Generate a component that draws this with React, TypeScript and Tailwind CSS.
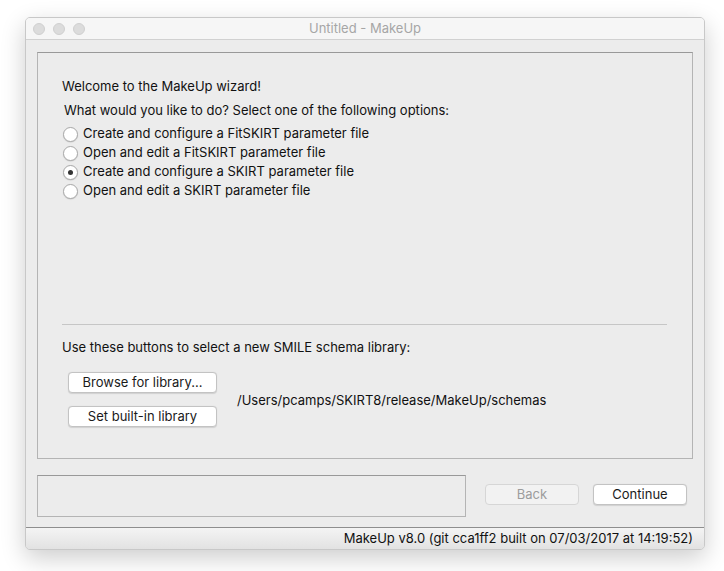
import React, { useState } from 'react';

const options = [
  'Create and configure a FitSKIRT parameter file',
  'Open and edit a FitSKIRT parameter file',
  'Create and configure a SKIRT parameter file',
  'Open and edit a SKIRT parameter file',
];

const Radio: React.FC<{ checked: boolean }> = ({ checked }) => (
  <span className="flex h-[15px] w-[15px] items-center justify-center rounded-full border border-[#a9a9a9] bg-white shadow-[0_0.5px_1px_rgba(0,0,0,0.15)]">
    {checked && <span className="h-[5px] w-[5px] rounded-full bg-[#333]" />}
  </span>
);

const MacButton: React.FC<{ label: string; disabled?: boolean; className?: string }> = ({
  label,
  disabled,
  className = '',
}) => (
  <button
    className={`flex h-[21px] items-center justify-center rounded-[4px] border text-[13px] ${
      disabled
        ? 'border-[#d6d6d6] bg-[#f2f2f2] text-[#9c9c9c]'
        : 'border-[#c3c3c3] bg-white text-[#1a1a1a] shadow-[0_0.5px_1px_rgba(0,0,0,0.12)]'
    } ${className}`}
  >
    {label}
  </button>
);

export default function App() {
  const [selected, setSelected] = useState(2);

  return (
    <div
      className="h-[571px] w-[724px] bg-white pl-[25px] pt-[17px]"
      style={{ fontFamily: 'Inter, "Liberation Sans", Arial, sans-serif' }}
    >
      {/* Window */}
      <div className="flex h-[533px] w-[680px] flex-col overflow-hidden rounded-[5px] border border-[#c8c8c8] bg-[#ececec] shadow-[0_8px_24px_rgba(0,0,0,0.2)]">
        {/* Title bar */}
        <div className="relative flex h-[22px] shrink-0 items-center border-b border-[#d1d1d1] bg-[#f6f6f6]">
          <div className="absolute left-[7px] top-[5px] flex gap-[8px]">
            <span className="h-[12px] w-[12px] rounded-full border border-[#d0d0d0] bg-[#dcdcdc]" />
            <span className="h-[12px] w-[12px] rounded-full border border-[#d0d0d0] bg-[#dcdcdc]" />
            <span className="h-[12px] w-[12px] rounded-full border border-[#d0d0d0] bg-[#dcdcdc]" />
          </div>
          <div className="w-full text-center text-[13px] text-[#a6a6a6]">Untitled - MakeUp</div>
        </div>

        {/* Content */}
        <div className="flex flex-1 flex-col px-[11px] pt-[12px]">
          {/* Wizard group box */}
          <div className="flex h-[407px] w-[656px] flex-col border border-[#b4b4b4] border-t-[#999] px-[24px] pt-[25px]">
            <div className="text-[13px] leading-[16px] text-[#111]">Welcome to the MakeUp wizard!</div>
            <div className="mt-[8px] pl-[2px] text-[13px] leading-[16px] text-[#111]">
              What would you like to do? Select one of the following options:
            </div>
            <div className="mt-[8px] flex flex-col gap-[3px]">
              {options.map((opt, i) => (
                <label
                  key={i}
                  onClick={() => setSelected(i)}
                  className="flex h-[16px] items-center gap-[5px] pl-[1px] text-[13px] text-[#111]"
                >
                  <Radio checked={selected === i} />
                  <span>{opt}</span>
                </label>
              ))}
            </div>

            <div className="flex-1" />

            <div className="h-px w-[605px] bg-[#c6c6c6]" />
            <div className="mt-[14px] text-[13px] leading-[16px] text-[#111]">
              Use these buttons to select a new SMILE schema library:
            </div>
            <div className="mb-[31px] mt-[17px] flex items-center pl-[6px]">
              <div className="flex flex-col gap-[13px]">
                <MacButton label="Browse for library..." className="w-[149px]" />
                <MacButton label="Set built-in library" className="w-[149px]" />
              </div>
              <div className="ml-[20px] mt-[2px] text-[13px] text-[#111]">
                /Users/pcamps/SKIRT8/release/MakeUp/schemas
              </div>
            </div>
          </div>

          {/* Bottom row */}
          <div className="mt-[16px] flex items-start">
            <div className="h-[42px] w-[429px] border border-[#b4b4b4] border-t-[#999]" />
            <MacButton label="Back" disabled className="ml-[19px] mt-[9px] w-[94px]" />
            <MacButton label="Continue" className="ml-[14px] mt-[9px] w-[94px]" />
          </div>
        </div>

        {/* Status bar */}
        <div className="flex h-[22px] shrink-0 items-center justify-end border-t border-[#8e8e8e] bg-gradient-to-b from-[#f4f4f4] to-[#e2e2e2] pr-[11px] text-[13px] text-[#111]">
          MakeUp v8.0 (git cca1ff2 built on 07/03/2017 at 14:19:52)
        </div>
      </div>
    </div>
  );
}
